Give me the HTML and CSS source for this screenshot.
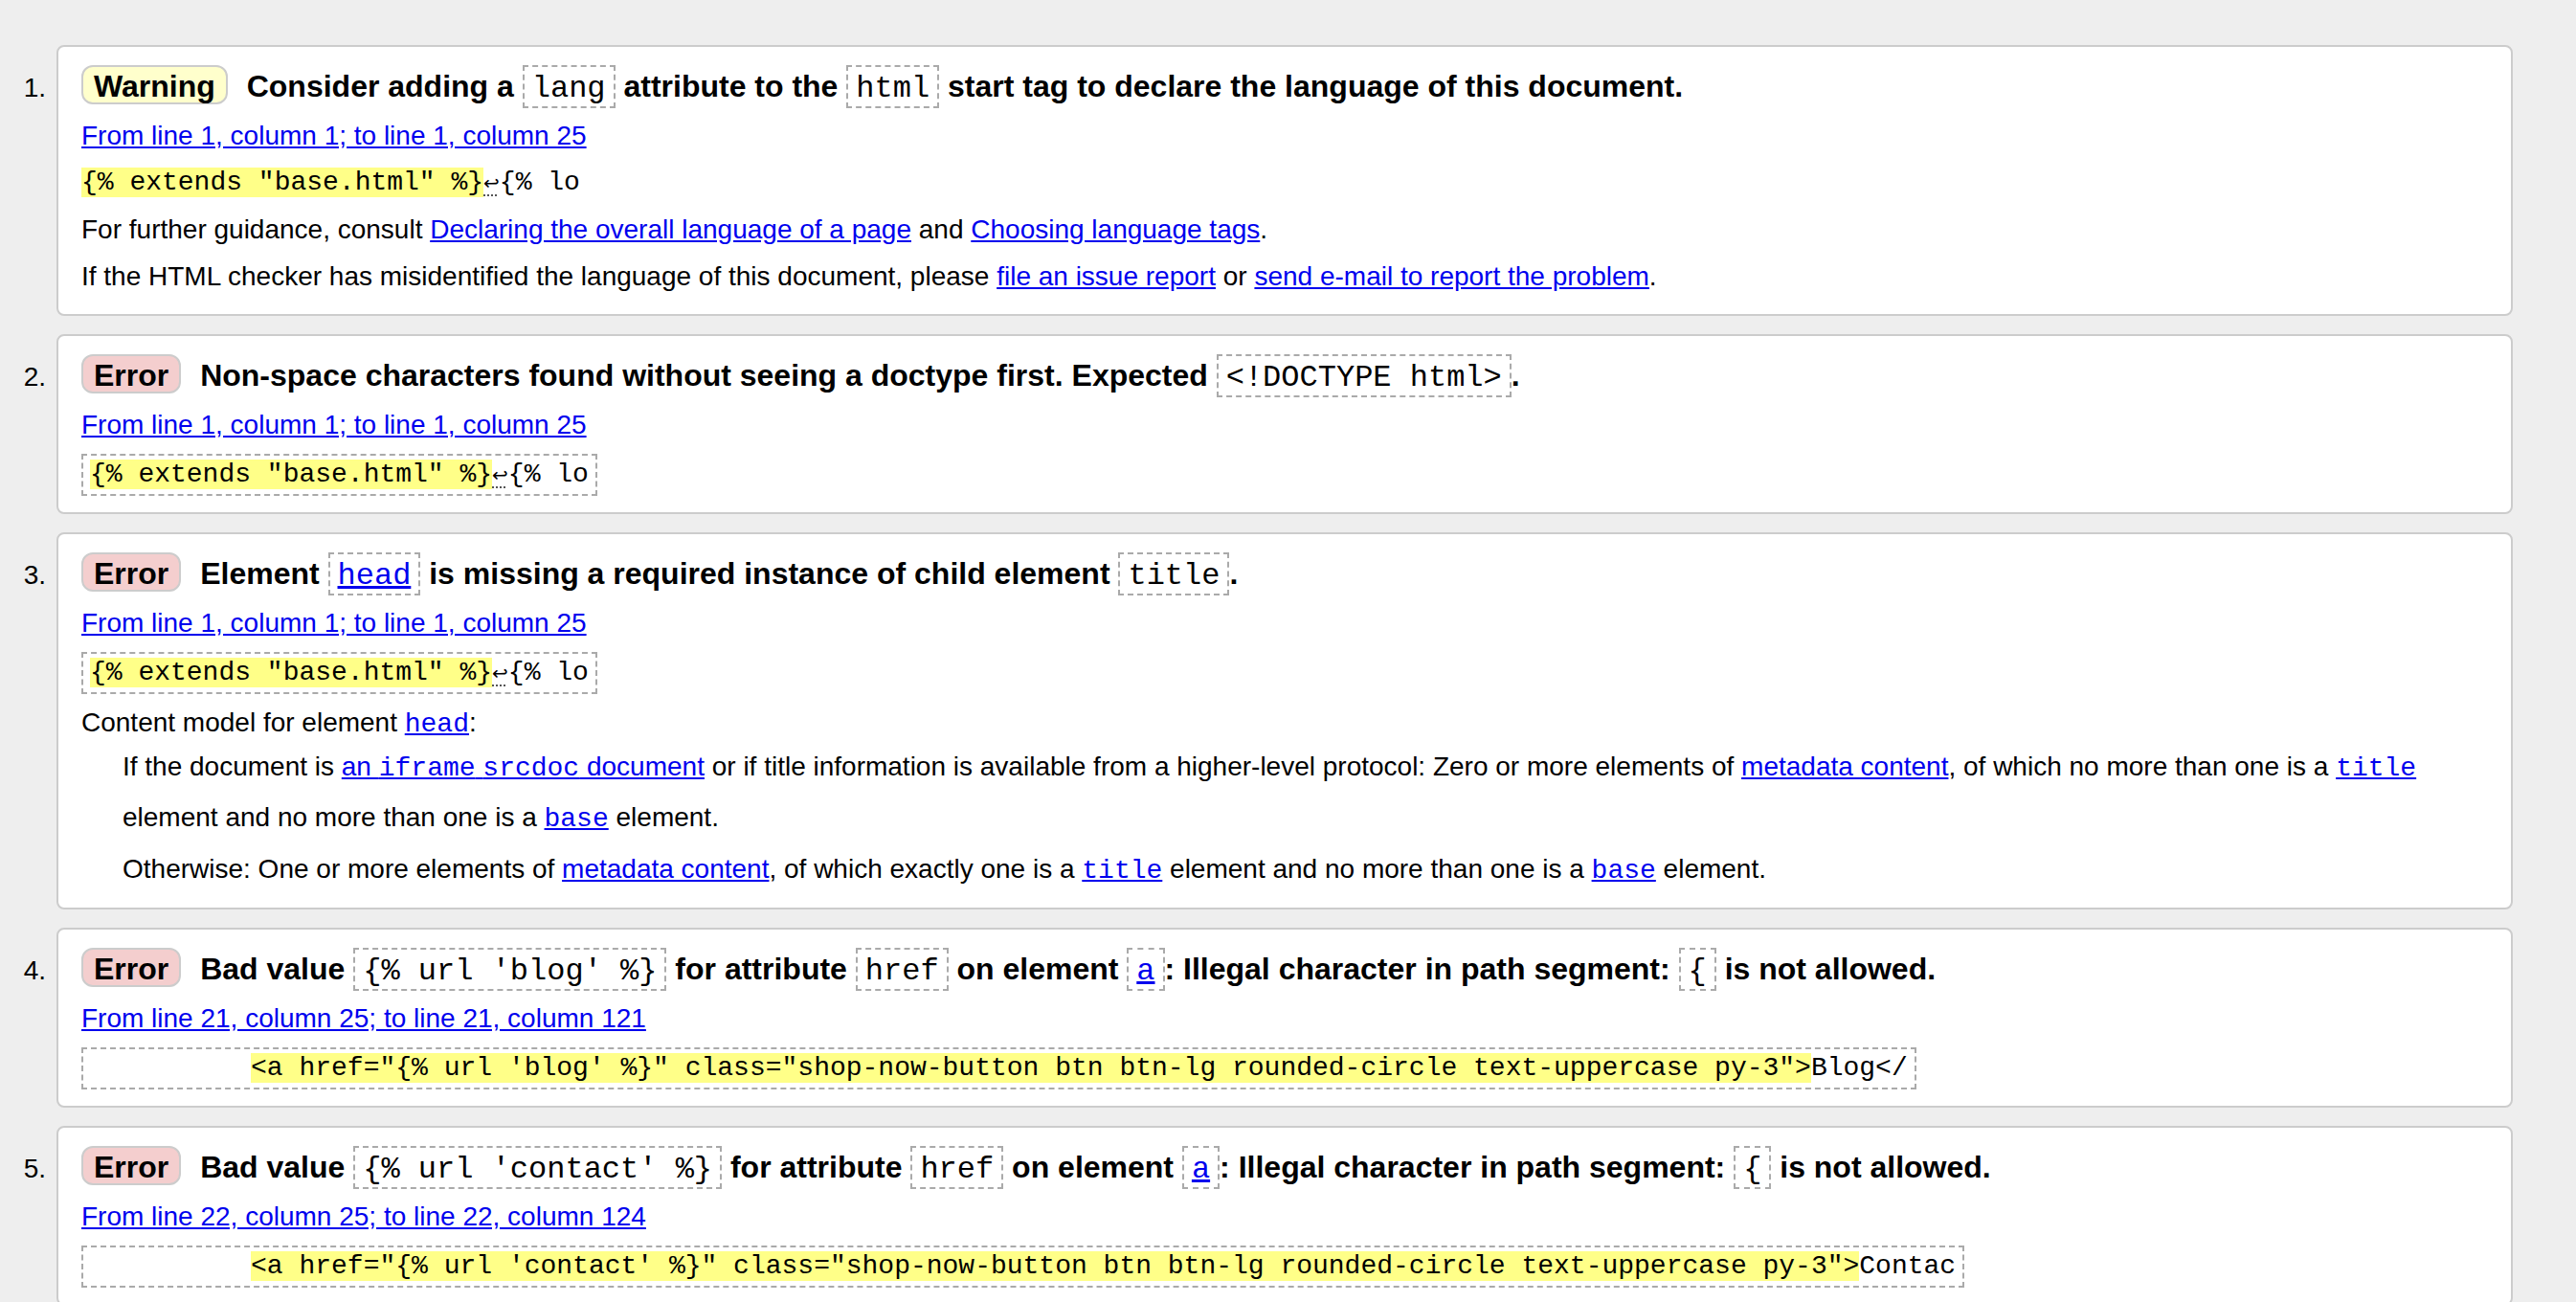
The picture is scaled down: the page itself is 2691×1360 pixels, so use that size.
FILE: index.html
```html
<!DOCTYPE html>
<html lang="en">
<head>
<meta charset="utf-8">
<title>Validation results</title>
<link rel="stylesheet" href="styles.css">
</head>
<body>
<ol class="messages">
  <li class="item">
    <span class="num">1.</span>
    <div class="card">
      <p class="title"><strong class="badge warning">Warning</strong> <span>Consider adding a <code class="box">lang</code> attribute to the <code class="box">html</code> start tag to declare the language of this document.</span></p>
      <p class="loc"><a href="#">From line 1, column 1; to line 1, column 25</a></p>
      <p class="extract"><code><mark>{% extends "base.html" %}</mark><span class="lf">↩</span>{% lo</code></p>
      <p class="note">For further guidance, consult <a href="#">Declaring the overall language of a page</a> and <a href="#">Choosing language tags</a>.</p>
      <p class="note">If the HTML checker has misidentified the language of this document, please <a href="#">file an issue report</a> or <a href="#">send e-mail to report the problem</a>.</p>
    </div>
  </li>
  <li class="item">
    <span class="num">2.</span>
    <div class="card">
      <p class="title"><strong class="badge error">Error</strong> <span>Non-space characters found without seeing a doctype first. Expected <code class="box">&lt;!DOCTYPE html&gt;</code>.</span></p>
      <p class="loc"><a href="#">From line 1, column 1; to line 1, column 25</a></p>
      <div class="extract boxed"><code><mark>{% extends "base.html" %}</mark><span class="lf">↩</span>{% lo</code></div>
    </div>
  </li>
  <li class="item">
    <span class="num">3.</span>
    <div class="card">
      <p class="title"><strong class="badge error">Error</strong> <span>Element <code class="box"><a href="#">head</a></code> is missing a required instance of child element <code class="box">title</code>.</span></p>
      <p class="loc"><a href="#">From line 1, column 1; to line 1, column 25</a></p>
      <div class="extract boxed"><code><mark>{% extends "base.html" %}</mark><span class="lf">↩</span>{% lo</code></div>
      <dl class="model">
        <dt>Content model for element <a href="#"><code class="c">head</code></a>:</dt>
        <dd>If the document is <a href="#">an <code class="c">iframe</code> <code class="c">srcdoc</code> document</a> or if title information is available from a higher-level protocol: Zero or more elements of <a href="#">metadata content</a>, of which no more than one is a <a href="#"><code class="c">title</code></a> element and no more than one is a <a href="#"><code class="c">base</code></a> element.</dd>
        <dd class="other">Otherwise: One or more elements of <a href="#">metadata content</a>, of which exactly one is a <a href="#"><code class="c">title</code></a> element and no more than one is a <a href="#"><code class="c">base</code></a> element.</dd>
      </dl>
    </div>
  </li>
  <li class="item">
    <span class="num">4.</span>
    <div class="card">
      <p class="title"><strong class="badge error">Error</strong> <span>Bad value <code class="box">{% url 'blog' %}</code> for attribute <code class="box">href</code> on element <code class="box"><a href="#">a</a></code>: Illegal character in path segment: <code class="box">{</code> is not allowed.</span></p>
      <p class="loc"><a href="#">From line 21, column 25; to line 21, column 121</a></p>
      <div class="extract boxed"><code>          <mark>&lt;a href="{% url 'blog' %}" class="shop-now-button btn btn-lg rounded-circle text-uppercase py-3"&gt;</mark>Blog&lt;/</code></div>
    </div>
  </li>
  <li class="item">
    <span class="num">5.</span>
    <div class="card">
      <p class="title"><strong class="badge error">Error</strong> <span>Bad value <code class="box">{% url 'contact' %}</code> for attribute <code class="box">href</code> on element <code class="box"><a href="#">a</a></code>: Illegal character in path segment: <code class="box">{</code> is not allowed.</span></p>
      <p class="loc"><a href="#">From line 22, column 25; to line 22, column 124</a></p>
      <div class="extract boxed"><code>          <mark>&lt;a href="{% url 'contact' %}" class="shop-now-button btn btn-lg rounded-circle text-uppercase py-3"&gt;</mark>Contac</code></div>
    </div>
  </li>
</ol>
</body>
</html>
```

FILE: styles.css
```css
html {
  overflow: hidden;
}

body {
  margin: 0;
  background: #eeeeee;
  color: #000;
  font-family: "Liberation Sans", Arial, sans-serif;
}

.messages {
  list-style: none;
  margin: 0;
  padding: 47px 66px 0 0;
  display: flex;
  flex-direction: column;
  gap: 19px;
}

.item {
  display: flex;
  align-items: baseline;
}

.num {
  flex: 0 0 59px;
  box-sizing: border-box;
  padding-right: 11px;
  text-align: right;
  font-size: 28px;
}

.card {
  flex: 1;
  min-width: 0;
  background: #fff;
  border: 2px solid #cccccc;
  border-radius: 8px;
  padding: 14px 14px 15px 24px;
  font-size: 28px;
}

.card p {
  margin: 0;
}

a {
  color: #0000ee;
}

.title {
  font-size: 32px;
  font-weight: bold;
  line-height: 54px;
}

.badge {
  display: inline-block;
  padding: 3px 11px 0;
  line-height: 34px;
  border: 2px solid #cccccc;
  border-radius: 12px;
  margin-right: 11px;
  font-weight: bold;
}

.warning {
  background: #ffffcc;
}

.error {
  background: #f4cece;
}

.box {
  display: inline-block;
  font-family: "Liberation Mono", "Courier New", monospace;
  font-size: 32px;
  font-weight: normal;
  line-height: 36px;
  padding: 5px 8px 0;
  border: 2px dashed #aaaaaa;
}

.loc {
  line-height: 50px;
}

.extract {
  margin-top: 4px;
  line-height: 48px;
  font-family: "Liberation Mono", "Courier New", monospace;
  font-size: 28px;
  white-space: pre;
}

.extract code {
  font-family: "Liberation Mono", "Courier New", monospace;
  font-size: 28px;
}

mark {
  background: #ffff88;
  color: inherit;
}

.lf {
  font-family: "DejaVu Sans", sans-serif;
  font-size: 20px;
  text-decoration: underline dotted #555;
  text-underline-offset: 5px;
}

.note {
  line-height: 49px;
}

.boxed {
  margin: 5px 0 2px;
}

.boxed code {
  display: block;
  width: fit-content;
  border: 2px dashed #aaaaaa;
  padding: 2px 7px;
  line-height: 36px;
}

.c {
  font-family: "Liberation Mono", "Courier New", monospace;
  font-size: 28px;
}

.model {
  margin: 12px 0 0;
}

.model dt {
  line-height: 36px;
}

.model dd {
  margin: 0 0 0 43px;
  line-height: 51px;
}

.model dd.other {
  margin-top: 3px;
  line-height: 47px;
}
```
